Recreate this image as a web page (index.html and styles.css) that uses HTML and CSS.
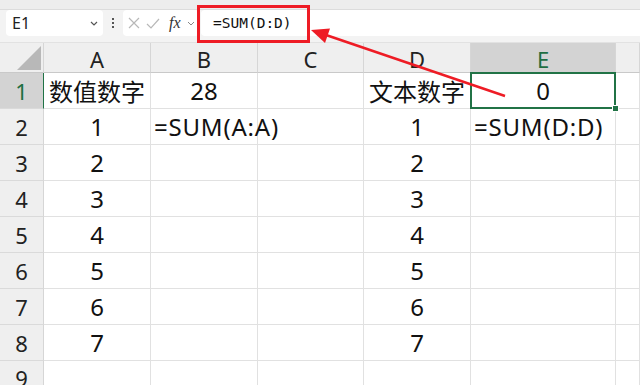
FILE: index.html
```html
<!DOCTYPE html>
<html lang="zh-CN">
<head>
    <meta charset="UTF-8">
    <meta name="viewport" content="width=device-width, initial-scale=1.0">
    <title>SUM 文本数字</title>
    <link rel="stylesheet" href="styles.css">
</head>
<body>
    <div class="sheet">
        <div class="ribbon-edge"></div>

        <div class="formula-bar">
            <div class="name-box">
                <span>E1</span>
                <svg class="chev" width="8" height="5" viewBox="0 0 8 5"><path d="M1 1 L4 4 L7 1" fill="none" stroke="#555" stroke-width="1.2"/></svg>
            </div>
            <div class="grip"><i></i><i></i><i></i></div>
            <div class="fx-box">
                <svg width="12" height="12" viewBox="0 0 12 12"><path d="M1 1 L11 11 M11 1 L1 11" stroke="#b8b8b8" stroke-width="1.2"/></svg>
                <svg width="14" height="11" viewBox="0 0 14 11"><path d="M1 6 L5 10 L13 1" fill="none" stroke="#b8b8b8" stroke-width="1.2"/></svg>
                <span class="fx">fx</span>
                <svg width="8" height="5" viewBox="0 0 8 5"><path d="M1 1 L4 4 L7 1" fill="none" stroke="#888" stroke-width="1"/></svg>
            </div>
            <div class="formula-input">
                <span class="formula-text">=SUM(D:D)</span>
            </div>
        </div>

        <div class="grid">
            <div class="corner"><span class="tri"></span></div>
            <div class="col-hd">A</div>
            <div class="col-hd">B</div>
            <div class="col-hd">C</div>
            <div class="col-hd">D</div>
            <div class="col-hd active">E</div>
            <div class="col-hd"></div>

            <div class="row-hd active">1</div>
            <div class="cell center">数值数字</div>
            <div class="cell center">28</div>
            <div class="cell"></div>
            <div class="cell center">文本数字</div>
            <div class="cell center selected">0</div>
            <div class="cell"></div>

            <div class="row-hd">2</div>
            <div class="cell center">1</div>
            <div class="cell overflow">=SUM(A:A)</div>
            <div class="cell"></div>
            <div class="cell center">1</div>
            <div class="cell overflow">=SUM(D:D)</div>
            <div class="cell"></div>

            <div class="row-hd">3</div>
            <div class="cell center">2</div>
            <div class="cell"></div>
            <div class="cell"></div>
            <div class="cell center">2</div>
            <div class="cell"></div>
            <div class="cell"></div>

            <div class="row-hd">4</div>
            <div class="cell center">3</div>
            <div class="cell"></div>
            <div class="cell"></div>
            <div class="cell center">3</div>
            <div class="cell"></div>
            <div class="cell"></div>

            <div class="row-hd">5</div>
            <div class="cell center">4</div>
            <div class="cell"></div>
            <div class="cell"></div>
            <div class="cell center">4</div>
            <div class="cell"></div>
            <div class="cell"></div>

            <div class="row-hd">6</div>
            <div class="cell center">5</div>
            <div class="cell"></div>
            <div class="cell"></div>
            <div class="cell center">5</div>
            <div class="cell"></div>
            <div class="cell"></div>

            <div class="row-hd">7</div>
            <div class="cell center">6</div>
            <div class="cell"></div>
            <div class="cell"></div>
            <div class="cell center">6</div>
            <div class="cell"></div>
            <div class="cell"></div>

            <div class="row-hd">8</div>
            <div class="cell center">7</div>
            <div class="cell"></div>
            <div class="cell"></div>
            <div class="cell center">7</div>
            <div class="cell"></div>
            <div class="cell"></div>

            <div class="row-hd last">9</div>
            <div class="cell"></div>
            <div class="cell"></div>
            <div class="cell"></div>
            <div class="cell"></div>
            <div class="cell"></div>
            <div class="cell"></div>
        </div>

        <!-- callout: box round the formula and arrow from E1 -->
        <div class="callout-box"></div>
        <svg class="callout-arrow" width="640" height="385" viewBox="0 0 640 385">
            <line x1="505" y1="96" x2="326" y2="35" stroke="#ee1c25" stroke-width="2.5"/>
            <polygon points="311,30 330,28.5 325,43" fill="#ee1c25"/>
        </svg>
    </div>
</body>
</html>
```

FILE: styles.css
```css
body {
    margin: 0;
    background-color: #fff;
    font-family: "Noto Sans", "Noto Sans CJK SC", sans-serif;
    color: #111;
}
.sheet {
    position: relative;
    width: 640px;
    height: 385px;
    overflow: hidden;
}
.ribbon-edge {
    height: 9px;
    background-color: #ededed;
    border-bottom: 1px solid #dcdcdc;
}
.formula-bar {
    display: flex;
    align-items: stretch;
    height: 26px;
    padding: 0 0 6px 6px;
    background-color: #f3f3f3;
    border-bottom: 1px solid #e2e2e2;
}
.name-box {
    display: flex;
    align-items: center;
    justify-content: space-between;
    width: 97px;
    box-sizing: border-box;
    padding: 0 5px 0 6px;
    background-color: #fff;
    border-radius: 4px;
    font-size: 16px;
    color: #222;
}
.grip {
    display: flex;
    flex-direction: column;
    justify-content: center;
    gap: 2px;
    width: 20px;
    align-items: center;
}
.grip i {
    width: 2px;
    height: 2px;
    background-color: #555;
}
.fx-box {
    display: flex;
    align-items: center;
    gap: 6px;
    width: 76px;
    box-sizing: border-box;
    padding-left: 5px;
    background-color: #fff;
    border-radius: 4px;
}
.fx {
    font-family: "Liberation Serif", serif;
    font-style: italic;
    font-size: 16px;
    color: #333;
    margin-left: 3px;
}
.formula-input {
    flex: 1;
    display: flex;
    align-items: center;
    margin-left: 2px;
    padding-left: 12px;
    background-color: #fff;
    border-radius: 4px 0 0 4px;
}
.formula-text {
    font-family: "DejaVu Sans Mono", monospace;
    font-size: 14.5px;
    color: #111;
}
.grid {
    display: grid;
    grid-template-columns: 44px 107px 107px 106px 107px 145px 1fr;
    grid-template-rows: 30px repeat(9, 36px);
}
.corner,
.col-hd,
.row-hd {
    background-color: #efefef;
    border-right: 1px solid #d6d6d6;
    border-bottom: 1px solid #c9c9c9;
    display: flex;
    align-items: center;
    justify-content: center;
    font-size: 22px;
    color: #222;
}
.corner {
    position: relative;
}
.tri {
    position: absolute;
    right: 2px;
    bottom: 2px;
    width: 0;
    height: 0;
    border-left: 24px solid transparent;
    border-bottom: 24px solid #b8b8b8;
}
.col-hd {
    padding-top: 3px;
    box-sizing: border-box;
}
.row-hd {
    border-bottom-color: #dadada;
}
.row-hd.last {
    align-items: flex-start;
    padding-top: 2px;
}
.col-hd.active {
    background-color: #d3d3d3;
    color: #1e6e42;
}
.row-hd.active {
    background-color: #d3d3d3;
    color: #1e6e42;
    border-right: 1px solid #217346;
}
.cell {
    border-right: 1px solid #e1e1e1;
    border-bottom: 1px solid #e1e1e1;
    display: flex;
    align-items: center;
    font-size: 24px;
    white-space: nowrap;
    position: relative;
}
.cell.center {
    justify-content: center;
}
.cell.overflow {
    padding-left: 3px;
    letter-spacing: 0.8px;
    overflow: visible;
    z-index: 1;
}
.cell.selected::after {
    content: "";
    position: absolute;
    left: -1px;
    top: -1px;
    right: -1px;
    bottom: -1px;
    border: 2px solid #217346;
}
.cell.selected::before {
    content: "";
    position: absolute;
    right: -4px;
    bottom: -4px;
    width: 5px;
    height: 5px;
    background-color: #217346;
    border: 1px solid #fff;
    z-index: 2;
}
.callout-box {
    position: absolute;
    left: 197px;
    top: 5px;
    width: 107px;
    height: 32px;
    border: 3px solid #ee1c25;
}
.callout-arrow {
    position: absolute;
    left: 0;
    top: 0;
    pointer-events: none;
}
```
